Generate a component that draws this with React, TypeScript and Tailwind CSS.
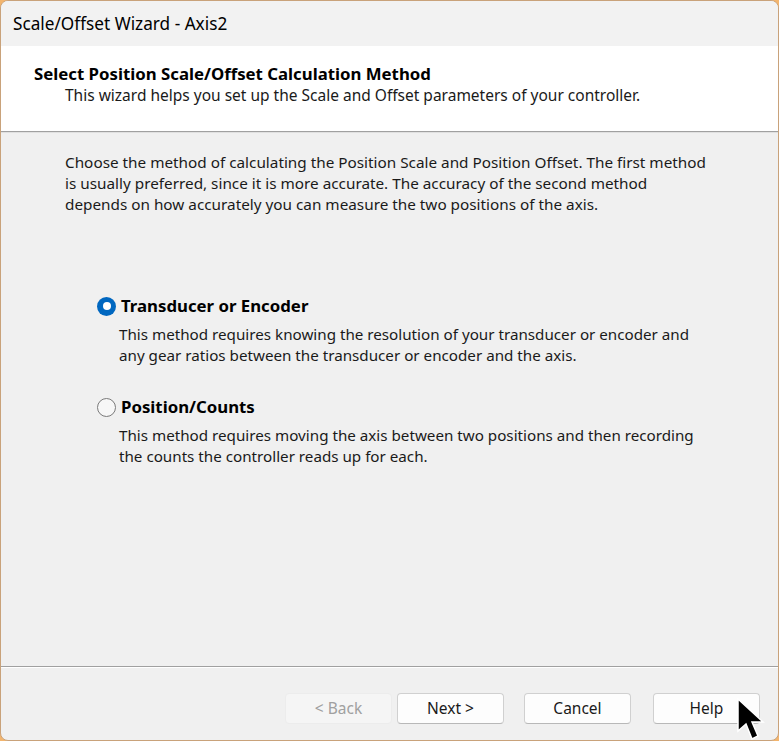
import React from "react";

const font = { fontFamily: '"Noto Sans", "Open Sans", sans-serif' };

const Radio = ({ checked }: { checked: boolean }) =>
  checked ? (
    <span className="w-[19px] h-[19px] rounded-full bg-[#0067c0] flex items-center justify-center shrink-0">
      <span className="w-[8px] h-[8px] rounded-full bg-white" />
    </span>
  ) : (
    <span className="w-[19px] h-[19px] rounded-full border border-[#7a7a7a] bg-[#f7f7f7] shrink-0" />
  );

const Option = ({ checked, label, lines }: { checked: boolean; label: string; lines: string[] }) => (
  <div className="flex flex-col">
    <div className="flex items-center gap-[5px] h-[22px]">
      <Radio checked={checked} />
      <span className="text-[16.8px] font-bold text-black">{label}</span>
    </div>
    <div className="pl-[22px] mt-[7px] text-[15.2px] leading-[21px] text-[#1a1a1a]">
      {lines.map((l) => (
        <div key={l}>{l}</div>
      ))}
    </div>
  </div>
);

const Btn = ({ children, disabled }: { children: React.ReactNode; disabled?: boolean }) => (
  <button
    className={
      disabled
        ? "w-[107px] h-[31px] rounded-[4px] bg-[#f5f5f5] border border-[#ececec] text-[#a0a0a0] text-[15.5px]"
        : "w-[107px] h-[31px] rounded-[4px] bg-[#fdfdfd] border border-[#d0d0d0] border-b-[#b8b8b8] text-[#1a1a1a] text-[15.5px]"
    }
  >
    {children}
  </button>
);

export default function App() {
  return (
    <div className="w-[779px] h-[741px] bg-[#f3b56e]" style={font}>
      <div className="w-full h-full rounded-[8px] border border-[#c9a27a] overflow-hidden flex flex-col bg-[#f0f0f0]">
        <div className="h-[45px] bg-[#f2f2f2] flex items-center pl-[12px] text-[17.2px] text-black shrink-0">
          Scale/Offset Wizard - Axis2
        </div>
        <div className="h-[85px] bg-white pl-[33px] pt-[16px] shrink-0">
          <div className="text-[16.8px] font-bold text-black leading-[23px]">
            Select Position Scale/Offset Calculation Method
          </div>
          <div className="pl-[31px] text-[15.5px] leading-[21px] text-[#1a1a1a]">
            This wizard helps you set up the Scale and Offset parameters of your controller.
          </div>
        </div>
        <div className="h-px bg-[#a0a0a0] shrink-0" />
        <div className="h-px bg-[#e0e0e0] shrink-0" />
        <div className="flex-1 flex flex-col pl-[64px] pt-[19px]">
          <div className="text-[15.3px] leading-[21px] text-[#1a1a1a]">
            <div>Choose the method of calculating the Position Scale and Position Offset. The first method</div>
            <div>is usually preferred, since it is more accurate. The accuracy of the second method</div>
            <div>depends on how accurately you can measure the two positions of the axis.</div>
          </div>
          <div className="pl-[32px] mt-[80px] flex flex-col gap-[30px]">
            <Option
              checked
              label="Transducer or Encoder"
              lines={[
                "This method requires knowing the resolution of your transducer or encoder and",
                "any gear ratios between the transducer or encoder and the axis.",
              ]}
            />
            <Option
              checked={false}
              label="Position/Counts"
              lines={[
                "This method requires moving the axis between two positions and then recording",
                "the counts the controller reads up for each.",
              ]}
            />
          </div>
        </div>
        <div className="h-px bg-[#a0a0a0] shrink-0" />
        <div className="h-px bg-white shrink-0" />
        <div className="h-[72px] relative flex items-start pt-[25px] pr-[18px] justify-end shrink-0">
          <div className="flex">
            <Btn disabled>&lt; Back</Btn>
            <div className="ml-[5px]">
              <Btn>Next &gt;</Btn>
            </div>
            <div className="ml-[20px]">
              <Btn>Cancel</Btn>
            </div>
            <div className="ml-[22px]">
              <Btn>Help</Btn>
            </div>
          </div>
          <svg className="absolute left-[736px] top-[30px]" width="30" height="46" viewBox="0 0 30 46">
            <path d="M1 1 L1 33 L9 26 L15 41 L21 38 L15 24 L26 24 Z" fill="black" stroke="white" strokeWidth="1.5" />
          </svg>
        </div>
      </div>
    </div>
  );
}
